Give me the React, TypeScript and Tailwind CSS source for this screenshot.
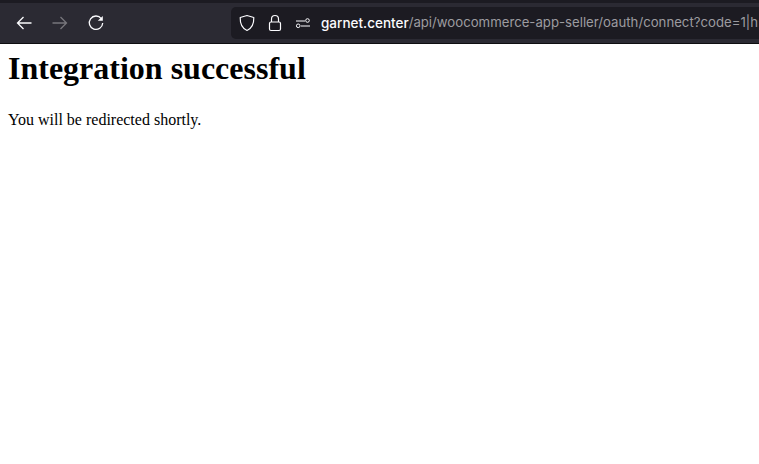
export default function App() {
  return (
    <div className="h-[464px] w-[759px] overflow-hidden bg-white">
      {/* Browser toolbar */}
      <div className="flex h-[44px] flex-col border-b border-[#0e0e10] bg-[#2b2a33]">
        <div className="h-[3px] shrink-0 bg-[#1c1b22]" />
        <div className="flex flex-1 items-center pl-[15px]">
          <svg className="h-[18px] w-[18px]" viewBox="0 0 18 18" fill="none" stroke="#fbfbfe" strokeWidth="1.300">
            <path d="M2.500 9H16.500M8.500 3 2.500 9 8.500 15" />
          </svg>
          <svg className="ml-[18px] h-[18px] w-[18px]" viewBox="0 0 18 18" fill="none" stroke="#77767c" strokeWidth="1.300">
            <path d="M1.500 9H15.500M9.500 3 15.500 9 9.500 15" />
          </svg>
          <svg className="ml-[18px] h-[18px] w-[18px]" viewBox="0 0 18 18" fill="none">
            <path d="M14.300 4.600A6.700 6.700 0 1 0 15.700 9" stroke="#fbfbfe" strokeWidth="1.300" />
            <path d="M10.800 6.800 15.800 2v4.800Z" fill="#fbfbfe" />
          </svg>

          {/* Address bar */}
          <div className="ml-[126px] flex h-[32px] flex-1 items-center overflow-hidden rounded-l-[5px] bg-[#1c1b22] pl-[8px] font-['Inter',sans-serif] whitespace-nowrap">
            <svg className="h-[18px] w-[16px] shrink-0" viewBox="0 0 16 18" fill="none" stroke="#fbfbfe" strokeWidth="1.2">
              <path d="M8 1.500 14.800 3.500c.2 6.400-2 10.800-6.800 13C3.200 14.300 1 9.900 1.200 3.500Z" strokeLinejoin="round" />
            </svg>
            <svg className="ml-[12px] h-[18px] w-[16px] shrink-0" viewBox="0 0 16 18" fill="none" stroke="#fbfbfe" strokeWidth="1.2">
              <path d="M4.500 8V5a3.500 3.500 0 0 1 7 0v3" />
              <rect x="2.500" y="8" width="11" height="8.500" rx="1.500" />
            </svg>
            <svg className="ml-[12px] h-[16px] w-[16px] shrink-0" viewBox="0 0 16 16" fill="none" stroke="#fbfbfe" strokeWidth="1">
              <path d="M1 6h9M6 11h9" />
              <circle cx="12.500" cy="5.500" r="1.800" />
              <circle cx="3.200" cy="10.800" r="1.800" />
            </svg>
            <span className="ml-[10px] text-[13.500px] font-medium text-[#fbfbfe]">garnet.center</span>
            <span className="text-[13.200px] text-[#9c9ba0]">/api/woocommerce-app-seller/oauth/connect?code=1|h</span>
          </div>
        </div>
      </div>

      {/* Page */}
      <div className="p-[8px] font-['Liberation_Serif',serif] text-black">
        <h1 className="mt-[-2px] text-[32px] leading-[37px] font-bold">Integration successful</h1>
        <p className="mt-[24px] text-[16px] leading-[18px]">You will be redirected shortly.</p>
      </div>
    </div>
  )
}
